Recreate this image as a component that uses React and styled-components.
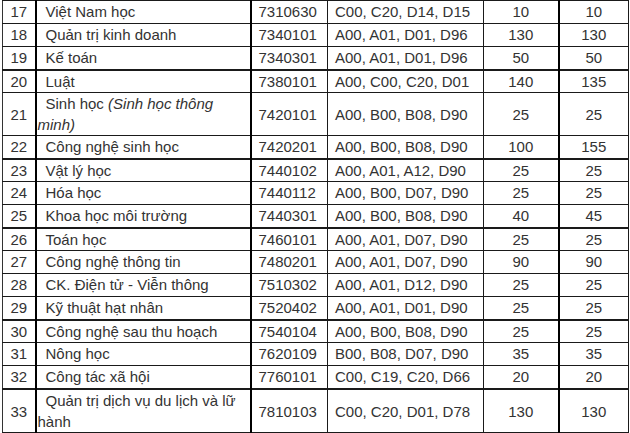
import React from "react";
import styled, { createGlobalStyle } from "styled-components";

const Global = createGlobalStyle`
  html, body { margin: 0; padding: 0; background: #fff; }
  body { font-family: "Liberation Sans", Arial, sans-serif; }
`;

const Page = styled.div`
  padding: 0 2px 0 2px;
  overflow: hidden;
  height: 433px;
`;

const Table = styled.table`
  border-collapse: collapse;
  table-layout: fixed;
  width: 626px;
  margin-top: -23px;
  font-size: 15px;
  color: #333;
`;

const Row = styled.tr`
  & > td {
    border-top-width: ${(p) => (p.$thick ? "2px" : "1px")};
    line-height: ${(p) => (p.$thick || p.$double ? "21px" : "22px")};
    height: ${(p) => (p.$thick ? "21px" : "22px")};
  }
`;

const Cell = styled.td`
  border: 1px solid #1a1a1a;
  border-left-width: ${(p) => (p.$thickLeft ? "2px" : "1px")};
  border-left-color: ${(p) => (p.$thickLeft ? "#000" : "#333")};
  padding: 0 ${(p) => (p.$pad ? "6px" : "1px")} 0 ${(p) => (p.$pad ? "7px" : "1px")};
  vertical-align: middle;
  text-align: ${(p) => p.$align || "left"};
  text-indent: ${(p) => (p.$indent ? "8px" : "0")};
  white-space: ${(p) => (p.$nowrap ? "nowrap" : "normal")};
`;

const Em = styled.em`
  font-style: italic;
`;

const rows = [
  ["17", "Việt Nam học", "7310630", "C00, C20, D14, D15", "10", "10"],
  ["18", "Quản trị kinh doanh", "7340101", "A00, A01, D01, D96", "130", "130"],
  ["19", "Kế toán", "7340301", "A00, A01, D01, D96", "50", "50"],
  ["20", "Luật", "7380101", "A00, C00, C20, D01", "140", "135", true],
  ["21", "SINH", "7420101", "A00, B00, B08, D90", "25", "25", false, true],
  ["22", "Công nghệ sinh học", "7420201", "A00, B00, B08, D90", "100", "155"],
  ["23", "Vật lý học", "7440102", "A00, A01, A12, D90", "25", "25", true],
  ["24", "Hóa học", "7440112", "A00, B00, D07, D90", "25", "25"],
  ["25", "Khoa học môi trường", "7440301", "A00, B00, B08, D90", "40", "45"],
  ["26", "Toán học", "7460101", "A00, A01, D07, D90", "25", "25", true],
  ["27", "Công nghệ thông tin", "7480201", "A00, A01, D07, D90", "90", "90"],
  ["28", "CK. Điện tử - Viễn thông", "7510302", "A00, A01, D12, D90", "25", "25"],
  ["29", "Kỹ thuật hạt nhân", "7520402", "A00, A01, D01, D90", "25", "25"],
  ["30", "Công nghệ sau thu hoạch", "7540104", "A00, B00, B08, D90", "25", "25", true],
  ["31", "Nông học", "7620109", "B00, B08, D07, D90", "35", "35"],
  ["32", "Công tác xã hội", "7760101", "C00, C19, C20, D66", "20", "20"],
  ["33", "Quản trị dịch vụ du lịch và lữ hành", "7810103", "C00, C20, D01, D78", "130", "130", true, true],
];

export default function App() {
  return (
    <>
      <Global />
      <Page>
        <Table>
          <colgroup>
            <col style={{ width: 33 }} />
            <col style={{ width: 215 }} />
            <col style={{ width: 77 }} />
            <col style={{ width: 156 }} />
            <col style={{ width: 75 }} />
            <col style={{ width: 70 }} />
          </colgroup>
          <tbody>
            <Row>
              <Cell $align="center">&nbsp;</Cell>
              <Cell $thickLeft />
              <Cell $thickLeft />
              <Cell />
              <Cell />
              <Cell $thickLeft />
            </Row>
            {rows.map(([n, name, code, combo, a, b, thick, double]) => (
              <Row key={n} $thick={thick} $double={double}>
                <Cell $align="center">{n}</Cell>
                <Cell $thickLeft $indent>
                  {name === "SINH" ? (
                    <>
                      Sinh học <Em>(Sinh học thông minh)</Em>
                    </>
                  ) : (
                    name
                  )}
                </Cell>
                <Cell $thickLeft $pad $nowrap>
                  {code}
                </Cell>
                <Cell $pad $nowrap>
                  {combo}
                </Cell>
                <Cell $align="center">{a}</Cell>
                <Cell $thickLeft $align="center">
                  {b}
                </Cell>
              </Row>
            ))}
          </tbody>
        </Table>
      </Page>
    </>
  );
}
